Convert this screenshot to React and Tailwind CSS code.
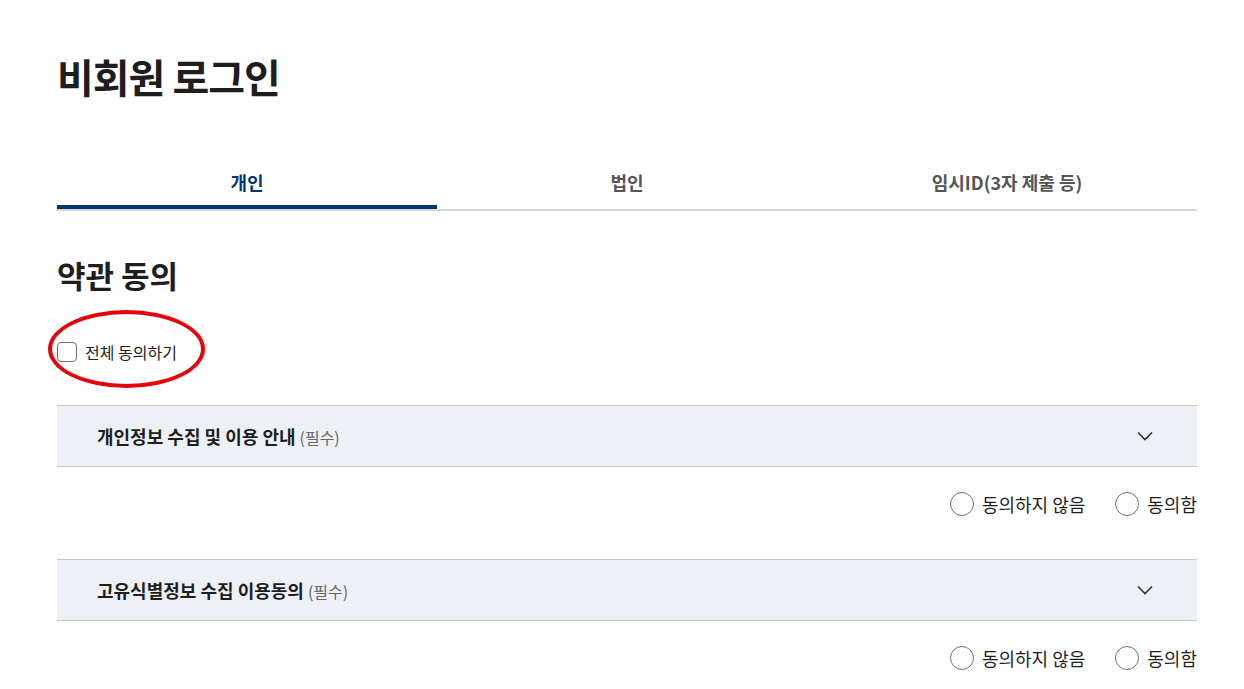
const tabs = [
  { label: '개인', active: true },
  { label: '법인' },
  { label: '임시ID(3자 제출 등)' },
]

const terms = [
  { title: '개인정보 수집 및 이용 안내' },
  { title: '고유식별정보 수집 이용동의' },
]

function Radio({ label }) {
  return (
    <label className="flex items-center gap-2">
      <span className="w-6 h-6 rounded-full border border-[#707070] bg-white" />
      <span className="text-[18px] text-[#1e1e1e]">{label}</span>
    </label>
  )
}

function Chevron() {
  return (
    <svg width="16" height="10" viewBox="0 0 16 10" fill="none" className="text-[#333]">
      <path d="M1 1.5 8 8.5l7-7" stroke="currentColor" strokeWidth="1.6" />
    </svg>
  )
}

function TermRow({ title }) {
  return (
    <div>
      <div className="h-[62px] flex items-center justify-between bg-[#edf0f5] border-y border-[#c6c8cc] pl-10 pr-11">
        <div className="flex items-baseline gap-1">
          <span className="text-[18px] font-bold text-[#1e1e1e]">{title}</span>
          <span className="text-[16px] text-[#666]">(필수)</span>
        </div>
        <Chevron />
      </div>
      <div className="h-[76px] flex items-center justify-end gap-[30px] -mt-[1px]">
        <Radio label="동의하지 않음" />
        <Radio label="동의함" />
      </div>
    </div>
  )
}

export default function App() {
  return (
    <div className="min-h-screen bg-white font-['Noto_Sans_CJK_KR','Noto_Sans',sans-serif] text-[#1e1e1e]">
      <div className="w-[1140px] ml-[57px]">
        <h1 className="pt-[48px] text-[40px] font-bold leading-[56px] tracking-tight">비회원 로그인</h1>

        <nav className="mt-[54px] flex border-b-2 border-[#d6d6d6]">
          {tabs.map(t => (
            <div
              key={t.label}
              className={
                t.active
                  ? 'flex-1 h-[51px] flex items-start justify-center pt-[11px] text-[18px] font-bold text-[#003675] border-b-4 border-[#003675] -mb-[2px]'
                  : 'flex-1 h-[51px] flex items-start justify-center pt-[11px] text-[18px] font-bold text-[#555]'
              }
            >
              {t.label}
            </div>
          ))}
        </nav>

        <h2 className="mt-[43px] text-[31px] font-bold leading-[42px]">약관 동의</h2>

        <div className="relative mt-[41px] h-[30px] flex items-center gap-2">
          <span className="w-5 h-5 rounded-[4px] border border-[#707070] bg-white" />
          <span className="text-[16px]">전체 동의하기</span>
          <span className="absolute -left-[9px] -top-[27px] w-[157px] h-[78px] rounded-[50%] border-[4px] border-[#e8000b]" />
        </div>

        <div className="mt-[38px] flex flex-col gap-[17px]">
          {terms.map(t => (
            <TermRow key={t.title} title={t.title} />
          ))}
        </div>
      </div>
    </div>
  )
}
